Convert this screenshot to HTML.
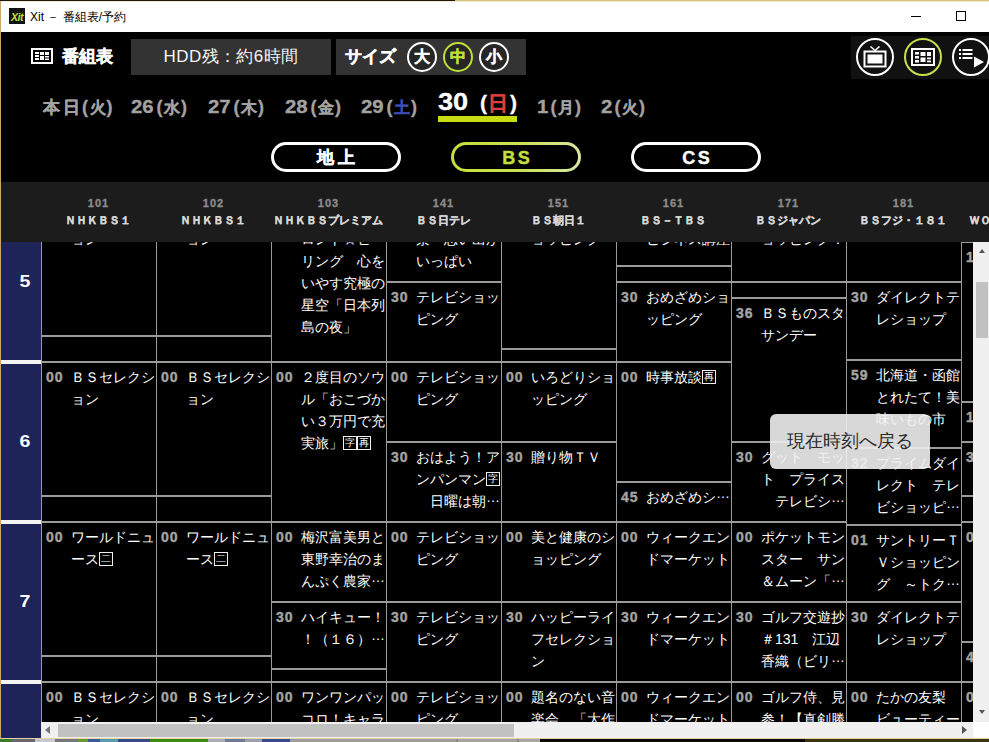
<!DOCTYPE html>
<html lang="ja">
<head>
<meta charset="utf-8">
<title>Xit － 番組表/予約</title>
<style>
*{box-sizing:border-box;margin:0;padding:0}
html,body{width:989px;height:742px;overflow:hidden;background:#000;font-family:"Liberation Sans",sans-serif}
#win{position:absolute;left:0;top:0;width:989px;height:742px;overflow:hidden;background:#000}
#edgeL{position:absolute;left:0;top:0;width:1px;height:739px;background:#cba868;z-index:50}
#edgeT{position:absolute;left:0;top:0;width:989px;height:1px;background:linear-gradient(90deg,#1e1a08 0,#1e1a08 455px,#d6c07c 455px,#d6c07c 989px);z-index:50}
#tb{position:absolute;left:1px;top:1px;width:988px;height:31px;background:#fff}
#logo{position:absolute;left:8px;top:7px;width:16px;height:16px;background:#111;color:#c5e03c;font:italic bold 10.5px/18px "Liberation Sans",sans-serif;text-align:center;letter-spacing:-0.5px}
#ttl{position:absolute;left:29px;top:8px;font-size:12px;line-height:16px;color:#000;white-space:nowrap}
.wb{position:absolute;top:0;height:31px}
#app{position:absolute;left:1px;top:32px;width:988px;height:707px;background:#000}
/* toolbar */
#t1{position:absolute;left:29px;top:15px;height:18px;white-space:nowrap}
#t1 span{position:absolute;left:32px;top:-1.5px;color:#fff;font-weight:bold;font-size:17px;line-height:22px;-webkit-text-stroke:.5px}
#hdd{position:absolute;left:130px;top:7px;width:200px;height:36px;background:#333;color:#f4f4f4;font-size:17px;line-height:36px;text-align:center;white-space:nowrap;letter-spacing:.4px}
#size{position:absolute;left:335px;top:7px;width:190px;height:36px;background:#333;color:#fff}
#size>span{position:absolute;left:9px;top:0;font-weight:bold;font-size:17px;line-height:36px;white-space:nowrap;-webkit-text-stroke:.5px}
.sz{position:absolute;top:3px;width:30px;height:30px;border:2px solid #fff;border-radius:50%;background:#262626;color:#fff;font-weight:bold;font-size:16px;line-height:26px;text-align:center;-webkit-text-stroke:.4px}
.sz.on{border-color:#bfe03a;color:#bfe03a}
#rt{position:absolute;left:850px;top:4px;width:138px;height:43px;background:#111}
/* dates */
.d{position:absolute;top:63px;color:#a2a2a2;font-weight:bold;font-size:18px;line-height:24px;white-space:nowrap;letter-spacing:1.5px}
.d i{font-style:normal;font-size:16px;letter-spacing:1px;position:relative;top:-.5px}
.d b{display:inline-block;letter-spacing:0;transform:scaleX(1.13);transform-origin:0 50%;margin-right:5.5px}
.d,#dsel{-webkit-text-stroke:.3px}
#dsel{position:absolute;left:437px;top:55px;color:#fff;font-weight:bold;font-size:23px;line-height:30px;white-space:nowrap;letter-spacing:3px}
#dsel small{font-size:21px;letter-spacing:1.5px}
#dsel i{font-style:normal;color:#e03c3c;font-size:20px}
#dsel b{display:inline-block;letter-spacing:0;transform:scaleX(1.18);transform-origin:0 50%;margin-right:7px}
#dul{position:absolute;left:437px;top:84px;width:79px;height:6px;background:#c8dc14}
/* pills */
.pill{position:absolute;top:110px;width:130px;height:30px;border:3px solid #fff;border-radius:15px;color:#fff;font-weight:bold;font-size:18px;line-height:27px;text-align:center;letter-spacing:2.5px;text-indent:2.5px;-webkit-text-stroke:.4px}
.pill.on{border-color:transparent;color:#c3df3e;background:linear-gradient(#000,#000) padding-box,linear-gradient(90deg,#c5e038 0,#c8e250 50%,#d6e8a4 100%) border-box}
/* channel header */
#chb{position:absolute;left:0;top:150px;width:988px;height:60px;background:#1c1c1c;overflow:hidden}
.ch{position:absolute;top:0;width:116px;height:60px;text-align:center;white-space:nowrap}
.ch span{position:absolute;left:-1.5px;width:116px;top:14px;font-size:11px;line-height:14px;color:#8c8c8c;font-weight:bold;letter-spacing:1px;-webkit-text-stroke:.3px}
.ch em{position:absolute;left:-22px;width:156px;top:31px;font-style:normal;font-size:11px;line-height:14px;color:#d6d6d6;font-weight:bold;-webkit-text-stroke:.3px}
/* time column */
#tc{position:absolute;left:0;top:210px;width:40px;height:497px;background:#1f2458;overflow:hidden}
.hr{position:absolute;left:0;width:40px;height:160px;border-top:4px solid #f4f4f4;color:#fff;font-weight:bold;font-size:18px;text-align:center}
.hr span{position:absolute;left:1px;width:46px;top:67px;line-height:22px;transform:scaleX(1.15);font-size:17px}
/* grid */
#grid{position:absolute;left:40px;top:210px;width:932px;height:480px;background:#000;overflow:hidden}
.c{position:absolute;width:116px;border-top:2px solid #9a9a9a;border-left:1px solid #9a9a9a;box-sizing:content-box;overflow:hidden;background:#000}
.c b{position:absolute;left:4px;top:4px;font-size:14px;line-height:20px;color:#a4a4a0;letter-spacing:1px;-webkit-text-stroke:.4px #a4a4a0}
.c p{position:absolute;left:29px;top:3px;width:86px;font-size:14px;line-height:22px;color:#fff;word-break:break-all;line-break:anywhere;white-space:break-spaces}
.k{display:inline-block;font-style:normal;width:14px;height:14px;border:1px solid #eee;font-size:10px;line-height:12px;text-align:center;vertical-align:-2px;overflow:hidden}
.c s{text-decoration:none;position:relative;top:-4px}
/* scrollbars */
#vs{position:absolute;left:972px;top:210px;width:17px;height:480px;background:#f0f0f0}
#vs div{position:absolute;left:3px;top:40px;width:12px;height:56px;background:#c1c1c1}
#hs{position:absolute;left:40px;top:690px;width:932px;height:17px;background:#f0f0f0}
#hs div{position:absolute;left:17px;top:2px;width:456px;height:13px;background:#c1c1c1}
.ar{position:absolute;width:0;height:0;border:4px solid transparent}
#tip{position:absolute;left:769px;top:382px;width:160px;height:55px;border-radius:6px;background:rgba(240,240,240,.9);color:#2a2a2a;font-size:18px;line-height:55px;text-align:center;white-space:nowrap}
#bot{position:absolute;left:0;top:739px;width:989px;height:3px;background:linear-gradient(90deg,#3a7a2a 0px,#3a7a2a 12px,#666a70 12px,#666a70 35px,#c4c8d0 35px,#c4c8d0 55px,#74787c 55px,#74787c 78px,#6a9a30 78px,#6a9a30 88px,#3a5a9a 88px,#3a5a9a 100px,#5a9aaa 100px,#5a9aaa 118px,#3a4a8a 118px,#3a4a8a 150px,#3a8a10 150px,#3a8a10 208px,#a8acb8 208px,#a8acb8 225px,#70789a 225px,#70789a 245px,#9aa0b0 245px,#9aa0b0 262px,#3a4a90 262px,#3a4a90 290px,#9c9c9c 290px,#9c9c9c 456px,#8a8a8a 456px,#8a8a8a 458px,#a2a2a2 458px,#a2a2a2 517px,#8a8a8a 517px,#8a8a8a 519px,#a6a6a6 519px,#a6a6a6 540px,#0a0a0a 540px,#0a0a0a 805px,#3a3412 805px,#3a3412 989px)}
#botl{position:absolute;left:0;top:738px;width:989px;height:1px;background:#e6d2a0}
</style>
</head>
<body>
<div id="win">
<div id="tb"><div style="position:absolute;left:0;top:0;width:988px;height:1px;background:#f4ecd6"></div>
  <div id="logo">Xit</div>
  <div id="ttl">Xit － 番組表/予約</div>
  <svg class="wb" style="left:900px" width="88" height="31" viewBox="0 0 88 31"><path d="M10 15.5h10" stroke="#000" stroke-width="1"/><rect x="55.5" y="10.5" width="9" height="9" fill="none" stroke="#000" stroke-width="1"/></svg>
</div>
<div id="app">
  <div id="t1">
    <svg width="24" height="18" viewBox="0 0 24 18"><rect x="2" y="2" width="20" height="14" fill="none" stroke="#fff" stroke-width="2"/><g fill="#fff"><rect x="5" y="5" width="4" height="2"/><rect x="10" y="5" width="4" height="3"/><rect x="15" y="5" width="4" height="3"/><rect x="5" y="8" width="4" height="2"/><rect x="10" y="9" width="4" height="4"/><rect x="15" y="9" width="4" height="1.5"/><rect x="5" y="11" width="4" height="2"/><rect x="15" y="11.5" width="4" height="1.5"/></g></svg>
    <span>番組表</span>
  </div>
  <div id="hdd">HDD残：約6時間</div>
  <div id="size"><span>サイズ</span>
    <div class="sz" style="left:71px">大</div><div class="sz on" style="left:107px">中</div><div class="sz" style="left:143px">小</div>
  </div>
  <div id="rt">
    <svg width="138" height="43" viewBox="0 0 138 43">
      <g fill="none" stroke="#fff" stroke-width="2">
        <circle cx="24" cy="21" r="18"/>
        <circle cx="72" cy="21" r="18" stroke="#c8e04a"/>
        <circle cx="120" cy="21" r="18"/>
        <rect x="13.500" y="15.500" width="21" height="15"/>
        <path d="M19.500 10.500l4.500 4 4.500-4" stroke-width="1.600"/>
        <rect x="61" y="13" width="22" height="16"/>
      </g>
      <g fill="#fff">
        <rect x="16.500" y="18.500" width="15" height="9"/>
        <rect x="64" y="16" width="4" height="2.500"/><rect x="69.500" y="16" width="5" height="4"/><rect x="76" y="16" width="4" height="4"/>
        <rect x="64" y="20" width="4" height="2.500"/><rect x="69.500" y="21.500" width="5" height="4.500"/><rect x="76" y="21.500" width="4" height="1.800"/>
        <rect x="64" y="24" width="4" height="2.500"/><rect x="76" y="24.500" width="4" height="1.800"/>
        <rect x="108" y="13" width="2" height="2"/><rect x="111.500" y="13" width="10" height="2"/>
        <rect x="108" y="17" width="2" height="2"/><rect x="111.500" y="17" width="10" height="2"/>
        <rect x="108" y="21" width="2" height="2"/><rect x="111.500" y="21" width="10" height="2"/>
        <path d="M123 20.500l10 5.500-10 5.500z"/>
      </g>
    </svg>
  </div>
  <div class="d" style="left:42px"><i style="font-size:17px;letter-spacing:2.5px">本日</i>(<i>火</i>)</div>
  <div class="d" style="left:130px"><b>26</b>(<i>水</i>)</div>
  <div class="d" style="left:207px"><b>27</b>(<i>木</i>)</div>
  <div class="d" style="left:284px"><b>28</b>(<i>金</i>)</div>
  <div class="d" style="left:360px"><b>29</b>(<i style="color:#3c4eb4">土</i>)</div>
  <div id="dsel"><b>30</b> <small>(<i>日</i>)</small></div>
  <div id="dul"></div>
  <div class="d" style="left:536px"><b style="margin-right:3.5px">1</b>(<i>月</i>)</div>
  <div class="d" style="left:600px"><b style="margin-right:3.5px">2</b>(<i>火</i>)</div>
  <div class="pill" style="left:270px;font-size:17px;letter-spacing:4px;text-indent:4px;line-height:25px">地上</div>
  <div class="pill on" style="left:450px">BS</div>
  <div class="pill" style="left:630px">CS</div>
  <div id="chb"><div class="ch" style="left:41px"><span>101</span><em>ＮＨＫＢＳ１</em></div><div class="ch" style="left:156px"><span>102</span><em>ＮＨＫＢＳ１</em></div><div class="ch" style="left:271px"><span>103</span><em>ＮＨＫＢＳプレミアム</em></div><div class="ch" style="left:386px"><span>141</span><em>ＢＳ日テレ</em></div><div class="ch" style="left:501px"><span>151</span><em>ＢＳ朝日１</em></div><div class="ch" style="left:616px"><span>161</span><em>ＢＳ－ＴＢＳ</em></div><div class="ch" style="left:731px"><span>171</span><em>ＢＳジャパン</em></div><div class="ch" style="left:846px"><span>181</span><em>ＢＳフジ・１８１</em></div><div class="ch" style="left:961px"><span>191</span><em>ＷＯＷＯＷプライム</em></div></div>
  <div id="tc"><div class="hr" style="top:-42px"><span>5</span></div><div class="hr" style="top:118px"><span>6</span></div><div class="hr" style="top:278px"><span>7</span></div><div class="hr" style="top:438px"><span>8</span></div></div>
  <div id="grid">
<div class="c" style="left:0px;top:-41px;height:132px"><b>00</b><p>ＢＳセレクション</p></div>
<div class="c" style="left:0px;top:93px;height:24px"></div>
<div class="c" style="left:0px;top:119px;height:132px"><b>00</b><p>ＢＳセレクション</p></div>
<div class="c" style="left:0px;top:253px;height:24px"></div>
<div class="c" style="left:0px;top:279px;height:132px"><b>00</b><p>ワールドニュース<i class="k">二</i></p></div>
<div class="c" style="left:0px;top:413px;height:24px"></div>
<div class="c" style="left:0px;top:439px;height:77px"><b>00</b><p>ＢＳセレクション</p></div>
<div class="c" style="left:115px;top:-41px;height:132px"><b>00</b><p>ＢＳセレクション</p></div>
<div class="c" style="left:115px;top:93px;height:24px"></div>
<div class="c" style="left:115px;top:119px;height:132px"><b>00</b><p>ＢＳセレクション</p></div>
<div class="c" style="left:115px;top:253px;height:24px"></div>
<div class="c" style="left:115px;top:279px;height:132px"><b>00</b><p>ワールドニュース<i class="k">二</i></p></div>
<div class="c" style="left:115px;top:413px;height:24px"></div>
<div class="c" style="left:115px;top:439px;height:77px"><b>00</b><p>ＢＳセレクション</p></div>
<div class="c" style="left:230px;top:-41px;height:158px"><b>00</b><p>コズミックフロント☆ヒーリング　心をいやす究極の星空「日本列島の夜」</p></div>
<div class="c" style="left:230px;top:119px;height:158px"><b>00</b><p>２度目のソウル「おこづかい３万円で充実旅」<i class="k">字</i><i class="k">再</i></p></div>
<div class="c" style="left:230px;top:279px;height:78px"><b>00</b><p>梅沢富美男と東野幸治のまんぷく農家<s>…</s></p></div>
<div class="c" style="left:230px;top:359px;height:65px"><b>30</b><p>ハイキュー！！（１６）<s>…</s></p></div>
<div class="c" style="left:230px;top:426px;height:11px"></div>
<div class="c" style="left:230px;top:439px;height:77px"><b>00</b><p>ワンワンパッコロ！キャラともワールド</p></div>
<div class="c" style="left:345px;top:-41px;height:78px"><b>00</b><p>にっぽん原風景　思い出がいっぱい</p></div>
<div class="c" style="left:345px;top:39px;height:78px"><b>30</b><p>テレビショッピング</p></div>
<div class="c" style="left:345px;top:119px;height:78px"><b>00</b><p>テレビショッピング</p></div>
<div class="c" style="left:345px;top:199px;height:78px"><b>30</b><p>おはよう！アンパンマン<i class="k">字</i>　日曜は朝<s>…</s></p></div>
<div class="c" style="left:345px;top:279px;height:78px"><b>00</b><p>テレビショッピング</p></div>
<div class="c" style="left:345px;top:359px;height:78px"><b>30</b><p>テレビショッピング</p></div>
<div class="c" style="left:345px;top:439px;height:77px"><b>00</b><p>テレビショッピング</p></div>
<div class="c" style="left:460px;top:-41px;height:145px"><b>00</b><p>美と健康のショッピング</p></div>
<div class="c" style="left:460px;top:106px;height:11px"></div>
<div class="c" style="left:460px;top:119px;height:78px"><b>00</b><p>いろどりショッピング</p></div>
<div class="c" style="left:460px;top:199px;height:78px"><b>30</b><p>贈り物ＴＶ</p></div>
<div class="c" style="left:460px;top:279px;height:78px"><b>00</b><p>美と健康のショッピング</p></div>
<div class="c" style="left:460px;top:359px;height:78px"><b>30</b><p>ハッピーライフセレクション</p></div>
<div class="c" style="left:460px;top:439px;height:77px"><b>00</b><p>題名のない音楽会　「大作曲家の秘密」</p></div>
<div class="c" style="left:575px;top:-41px;height:62px"><b>00</b><p>朝から学べるビジネス講座</p></div>
<div class="c" style="left:575px;top:23px;height:14px"></div>
<div class="c" style="left:575px;top:39px;height:78px"><b>30</b><p>おめざめショッピング</p></div>
<div class="c" style="left:575px;top:119px;height:118px"><b>00</b><p>時事放談<i class="k">再</i></p></div>
<div class="c" style="left:575px;top:239px;height:38px"><b>45</b><p>おめざめシ<s>…</s></p></div>
<div class="c" style="left:575px;top:279px;height:78px"><b>00</b><p>ウィークエンドマーケット</p></div>
<div class="c" style="left:575px;top:359px;height:78px"><b>30</b><p>ウィークエンドマーケット</p></div>
<div class="c" style="left:575px;top:439px;height:77px"><b>00</b><p>ウィークエンドマーケット</p></div>
<div class="c" style="left:690px;top:-41px;height:78px"><b>00</b><p>わくわく！ショッピング！</p></div>
<div class="c" style="left:690px;top:39px;height:14px"></div>
<div class="c" style="left:690px;top:55px;height:142px"><b>36</b><p>ＢＳものスタサンデー</p></div>
<div class="c" style="left:690px;top:199px;height:78px"><b>30</b><p>グット　モット　プライス　テレビシ<s>…</s></p></div>
<div class="c" style="left:690px;top:279px;height:78px"><b>00</b><p>ポケットモンスター　サン＆ムーン「<s>…</s></p></div>
<div class="c" style="left:690px;top:359px;height:78px"><b>30</b><p>ゴルフ交遊抄＃131　江辺香織（ビリ<s>…</s></p></div>
<div class="c" style="left:690px;top:439px;height:77px"><b>00</b><p>ゴルフ侍、見参！【真剣勝負】</p></div>
<div class="c" style="left:805px;top:-121px;height:158px"></div>
<div class="c" style="left:805px;top:39px;height:76px"><b>30</b><p>ダイレクトテレショップ</p></div>
<div class="c" style="left:805px;top:117px;height:86px"><b>59</b><p>北海道・函館とれたて！美味いもの市</p></div>
<div class="c" style="left:805px;top:205px;height:75px"><b>32</b><p>プライムダイレクト　テレビショッピ<s>…</s></p></div>
<div class="c" style="left:805px;top:282px;height:75px"><b>01</b><p>サントリーＴＶショッピング　～トク<s>…</s></p></div>
<div class="c" style="left:805px;top:359px;height:78px"><b>30</b><p>ダイレクトテレショップ</p></div>
<div class="c" style="left:805px;top:439px;height:77px"><b>00</b><p>たかの友梨　ビューティークリニック</p></div>
<div class="c" style="left:920px;top:-1px;height:158px"><b>15</b></div>
<div class="c" style="left:920px;top:159px;height:38px"><b>15</b></div>
<div class="c" style="left:920px;top:199px;height:52px"><b>30</b></div>
<div class="c" style="left:920px;top:253px;height:24px"></div>
<div class="c" style="left:920px;top:279px;height:118px"><b>00</b></div>
<div class="c" style="left:920px;top:399px;height:38px"><b>45</b></div>
<div class="c" style="left:920px;top:439px;height:77px"><b>00</b></div>
  </div>
  <div id="vs"><div></div><span class="ar" style="left:5.5px;top:7px;border-width:0 3.5px 4px 3.5px;border-bottom:4px solid #555"></span><span class="ar" style="left:5.5px;top:468px;border-width:4px 3.5px 0 3.5px;border-top:4px solid #555"></span></div>
  <div id="hs"><div></div><span class="ar" style="left:4px;top:4px;border-right:5px solid #777;border-left:0"></span><span class="ar" style="left:921px;top:4px;border-left:5px solid #555;border-right:0"></span></div>
  <div style="position:absolute;left:972px;top:690px;width:17px;height:17px;background:#fff"></div>
  <div id="tip">現在時刻へ戻る</div>
</div>
<div id="botl"></div>
<div id="bot"></div>
<div id="edgeL"></div><div id="edgeT"></div>
</div>
</body>
</html>
